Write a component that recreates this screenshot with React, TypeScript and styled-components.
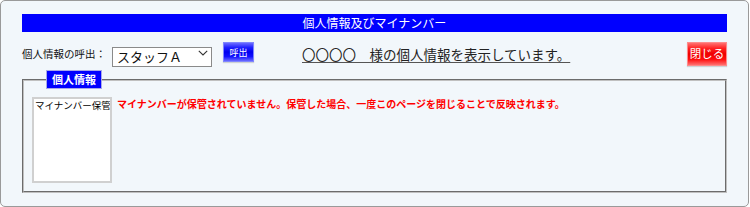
import React from "react";
import styled, { createGlobalStyle } from "styled-components";

const Global = createGlobalStyle`
  html, body { margin: 0; padding: 0; background: #ffffff; }
  body { font-family: "Noto Sans CJK JP", "Noto Sans", sans-serif; }
  * { box-sizing: border-box; }
`;

const Panel = styled.div`
  width: 749px;
  height: 207px;
  border: 1px solid #9a9a9a;
  border-radius: 5px;
  background: #f2f7fb;
  padding: 13px 21px 0 21px;
  display: flex;
  flex-direction: column;
`;

const TitleBar = styled.div`
  height: 18px;
  background: #0000ff;
  color: #ffffff;
  font-size: 12px;
  line-height: 18px;
  text-align: center;
`;

const Toolbar = styled.div`
  margin-top: 9px;
  height: 25px;
  display: flex;
  align-items: center;
`;

const Label = styled.span`
  font-size: 10.5px;
  color: #111;
  width: 90px;
  white-space: nowrap;
`;

const SelectWrap = styled.div`
  position: relative;
  width: 100px;
  height: 20px;
  margin-top: -2px;
`;

const StaffSelect = styled.select`
  appearance: none;
  -webkit-appearance: none;
  width: 100%;
  height: 100%;
  border: 1px solid #8a8a8a;
  border-radius: 0;
  background: #ffffff;
  font-family: "Noto Sans CJK JP", sans-serif;
  font-size: 13px;
  color: #111;
  padding: 0 0 0 4px;
  line-height: 18px;
  outline: none;
`;

const Chevron = styled.svg`
  position: absolute;
  right: 4px;
  top: 7px;
  pointer-events: none;
`;

const GlossButton = styled.button<{ $tone: "blue" | "red"; $w: number; $h: number; $fs: number }>`
  width: ${(p) => p.$w}px;
  height: ${(p) => p.$h}px;
  padding: 0;
  font-family: "Noto Sans CJK JP", sans-serif;
  font-size: ${(p) => p.$fs}px;
  color: #ffffff;
  line-height: 1;
  cursor: pointer;
  border: 1px solid ${(p) => (p.$tone === "blue" ? "#7f86ff" : "#ff8a8a")};
  box-shadow: 0 1px 1px rgba(0, 0, 0, 0.15);
  background: ${(p) =>
    p.$tone === "blue"
      ? "linear-gradient(#6a6aff 0%, #2020ff 25%, #0000ee 50%, #1010ff 75%, #6a6aff 100%)"
      : "linear-gradient(#ff7070 0%, #ff2020 25%, #ee0000 50%, #ff1010 75%, #ff7070 100%)"};
`;

const CallButton = styled(GlossButton)`
  margin-left: 11px;
  margin-top: -3px;
`;

const Message = styled.span`
  margin-left: 48px;
  font-size: 13.5px;
  color: #222;
  text-decoration: underline;
  text-decoration-color: #555;
  text-underline-offset: 2px;
  white-space: nowrap;
`;

const CloseButton = styled(GlossButton)`
  margin-left: auto;
`;

const Group = styled.fieldset`
  margin: 4px 0 0 0;
  padding: 8px 8px 8px 8px;
  border: 2px groove #c0c0c0;
  height: 123px;
  display: flex;
  align-items: flex-start;
`;

const GroupLegend = styled.legend`
  margin-left: 14px;
  padding: 0 5px;
  height: 19px;
  line-height: 17px;
  background: #0000ff;
  color: #ffffff;
  font-size: 11px;
  font-weight: bold;
  border: 1px solid #a8a8e8;
`;

const ListBox = styled.div`
  width: 80px;
  height: 86px;
  background: #ffffff;
  border: 2px solid #d0d0d0;
  font-size: 9.5px;
  line-height: 13px;
  color: #000;
  padding-left: 1px;
  overflow: hidden;
  white-space: nowrap;
  flex-shrink: 0;
`;

const Notice = styled.p`
  margin: 0 0 0 5px;
  color: #ff0000;
  font-size: 10px;
  font-weight: bold;
  line-height: 13px;
  white-space: nowrap;
`;

export default function App() {
  return (
    <>
      <Global />
      <Panel>
        <TitleBar>個人情報及びマイナンバー</TitleBar>
        <Toolbar>
          <Label>個人情報の呼出：</Label>
          <SelectWrap>
            <StaffSelect defaultValue="a">
              <option value="a">スタッフＡ</option>
            </StaffSelect>
            <Chevron width="10" height="6" viewBox="0 0 10 6">
              <path d="M0.8 0.8 L5 5 L9.2 0.8" fill="none" stroke="#333" strokeWidth="1.1" />
            </Chevron>
          </SelectWrap>
          <CallButton $tone="blue" $w={31} $h={20} $fs={9}>
            呼出
          </CallButton>
          <Message>〇〇〇〇　様の個人情報を表示しています。</Message>
          <CloseButton $tone="red" $w={40} $h={24} $fs={11.5}>
            閉じる
          </CloseButton>
        </Toolbar>
        <Group>
          <GroupLegend>個人情報</GroupLegend>
          <ListBox>マイナンバー保管</ListBox>
          <Notice>
            マイナンバーが保管されていません。保管した場合、一度このページを閉じることで反映されます。
          </Notice>
        </Group>
      </Panel>
    </>
  );
}
